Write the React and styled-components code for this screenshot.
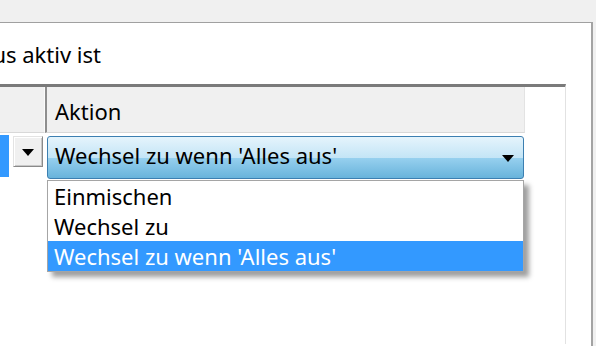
import React from 'react';
import styled, { createGlobalStyle } from 'styled-components';

const Global = createGlobalStyle`
  html, body { margin: 0; padding: 0; background: #f0f0f0; }
  body {
    width: 596px;
    height: 346px;
    overflow: hidden;
    font-family: "Noto Sans", "Open Sans", sans-serif;
    color: #000;
  }
`;

const Window = styled.div`
  padding-top: 22px;
  height: 346px;
  box-sizing: border-box;
`;

const Panel = styled.div`
  margin-left: -40px;
  width: 633px;
  height: 340px;
  box-sizing: border-box;
  background: #fff;
  border-top: 1px solid #a0a0a0;
  border-right: 2px solid #a3a3a3;
  padding-top: 16px;
`;

const TitleClip = styled.div`
  width: 141px;
  display: flex;
  justify-content: flex-end;
  font-size: 22px;
  line-height: 30px;
  white-space: nowrap;
`;

const TitleText = styled.span`
  flex-shrink: 0;
`;

const ListView = styled.div`
  margin-top: 15px;
  width: 606px;
  height: 260px;
  box-sizing: border-box;
  border-top: 3px solid #7a7a7a;
  border-right: 1px solid #e2e2e2;
`;

const HeaderRow = styled.div`
  display: flex;
  height: 46px;
  box-sizing: border-box;
`;

const HeaderCell = styled.div`
  width: ${p => p.$w}px;
  flex-shrink: 0;
  box-sizing: border-box;
  background: #f0f0f0;
  border-bottom: 1px solid #d8d8d8;
  border-left: ${p => (p.$split ? '2px solid #8e8e8e' : 'none')};
  border-right: 1px solid ${p => (p.$split ? '#e3e3e3' : '#fbfbfb')};
  padding: 9px 0 0 8px;
  font-size: 22px;
  line-height: 30px;
  white-space: nowrap;
`;

const HeaderFiller = styled.div`
  flex: 1;
  background: #fff;
`;

const BodyRow = styled.div`
  display: flex;
  height: 46px;
`;

const Cell = styled.div`
  width: ${p => p.$w}px;
  flex-shrink: 0;
  box-sizing: border-box;
  display: flex;
  align-items: flex-start;
  gap: 4px;
  padding-top: ${p => p.$pt}px;
  padding-left: ${p => p.$pl || 0}px;
`;

const SelectedStrip = styled.div`
  width: 49px;
  height: 42px;
  background: #3399ff;
`;

const SmallButton = styled.div`
  margin-top: 1px;
  width: 30px;
  height: 31px;
  box-sizing: border-box;
  background: #f0f0f0;
  border: 1px solid;
  border-color: #e3e3e3 #8a8a8a #8a8a8a #e3e3e3;
  box-shadow: inset 1px 1px 0 #fff, inset -1px -1px 0 #c8c8c8;
  display: flex;
  align-items: center;
  justify-content: center;
  padding-top: 2px;
`;

const Arrow = styled.span`
  width: 0;
  height: 0;
  border-left: 6px solid transparent;
  border-right: 6px solid transparent;
  border-top: 7px solid #000;
`;

const Combo = styled.div`
  position: relative;
  width: 477px;
  height: 43px;
  box-sizing: border-box;
  border: 1px solid #3c7fb1;
  border-radius: 3px;
  background: linear-gradient(#e5f4fc 0%, #c4e5f6 50%, #98d1ef 50%, #68b3db 100%);
  display: flex;
  align-items: flex-start;
  justify-content: space-between;
  padding: 3px 9px 0 7px;
  font-size: 22px;
  line-height: 30px;
  white-space: nowrap;
`;

const ComboArrow = styled(Arrow)`
  margin-top: 15px;
`;

const DropList = styled.div`
  position: absolute;
  top: calc(100% + 2px);
  left: -1px;
  width: 477px;
  box-sizing: border-box;
  background: #fff;
  border: 1px solid #a5a5a5;
  box-shadow: 5px 5px 5px rgba(0, 0, 0, 0.38);
  z-index: 2;
`;

const Item = styled.div`
  height: 30px;
  box-sizing: border-box;
  padding: 1px 0 0 6px;
  font-size: 22px;
  line-height: 29px;
  white-space: nowrap;
  background: ${p => (p.$active ? '#3399ff' : 'transparent')};
  color: ${p => (p.$active ? '#fff' : '#000')};
`;

const options = ['Einmischen', 'Wechsel zu', "Wechsel zu wenn 'Alles aus'"];

export default function App() {
  return (
    <>
      <Global />
      <Window>
        <Panel>
          <TitleClip>
            <TitleText>Aktion, wenn Modus aktiv ist</TitleText>
          </TitleClip>
          <ListView>
            <HeaderRow>
              <HeaderCell $w={85} />
              <HeaderCell $w={480} $split>Aktion</HeaderCell>
              <HeaderFiller />
            </HeaderRow>
            <BodyRow>
              <Cell $w={85} $pt={2}>
                <SelectedStrip />
                <SmallButton>
                  <Arrow />
                </SmallButton>
              </Cell>
              <Cell $w={480} $pt={3} $pl={2}>
                <Combo>
                  <span>Wechsel zu wenn 'Alles aus'</span>
                  <ComboArrow />
                  <DropList>
                    {options.map((o, i) => (
                      <Item key={o} $active={i === options.length - 1}>
                        {o}
                      </Item>
                    ))}
                  </DropList>
                </Combo>
              </Cell>
            </BodyRow>
          </ListView>
        </Panel>
      </Window>
    </>
  );
}
